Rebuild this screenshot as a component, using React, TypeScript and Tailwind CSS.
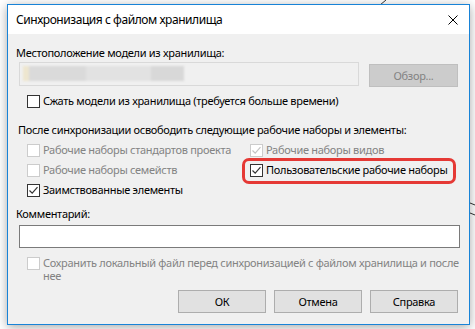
import React from 'react';

const font = { fontFamily: '"Noto Sans", "Segoe UI", Arial, sans-serif' };

type BoxProps = { checked?: boolean; disabled?: boolean };

const CheckBox = ({ checked, disabled }: BoxProps) => (
  <div
    className={`w-[13px] h-[13px] shrink-0 bg-white border ${
      disabled ? 'border-[#cccccc]' : 'border-[#333333]'
    } flex items-center justify-center`}
  >
    {checked && (
      <svg width="11" height="11" viewBox="0 0 11 11">
        <path
          d="M1.5 5.5 L4.2 8.2 L9.5 2.2"
          fill="none"
          stroke={disabled ? '#c4c4c4' : '#333333'}
          strokeWidth="1.2"
        />
      </svg>
    )}
  </div>
);

const Option = ({
  label,
  checked,
  disabled,
}: BoxProps & { label: string }) => (
  <div className="flex items-center gap-[3px] h-5 whitespace-nowrap">
    <CheckBox checked={checked} disabled={disabled} />
    <span className={disabled ? 'text-[#838383]' : 'text-black'}>{label}</span>
  </div>
);

const Button = ({ label }: { label: string }) => (
  <div className="w-[88px] h-[23px] border border-[#adadad] bg-[#e1e1e1] flex items-center justify-center text-black">
    {label}
  </div>
);

export default function App() {
  return (
    <div
      className="relative w-[475px] h-[329px] bg-white overflow-hidden text-[11px] leading-4 tracking-[-0.3px] whitespace-nowrap"
      style={font}
    >
      {/* background lines behind the dialog */}
      <svg className="absolute left-0 top-0" width="475" height="329">
        <path d="M380 5 L386 0" stroke="#333" strokeWidth="1" fill="none" />
        <path d="M470 203 L475 205" stroke="#333" strokeWidth="1" fill="none" />
        <path d="M470 213 L475 215" stroke="#333" strokeWidth="1" fill="none" />
      </svg>

      <div className="relative ml-[7px] mt-[4px] w-[463px] h-[321px] border border-[#1883d7] bg-[#f0f0f0] shadow-[0_2px_10px_rgba(0,0,0,0.35)] flex flex-col">
        {/* Title bar */}
        <div className="h-[29px] bg-white flex items-center justify-between pl-[8px] pr-[11px] shrink-0">
          <span className="text-black text-[12px] tracking-[-0.45px]">
            Синхронизация с файлом хранилища
          </span>
          <svg width="10" height="10" viewBox="0 0 10 10">
            <path d="M0.5 0.5 L9.5 9.5 M9.5 0.5 L0.5 9.5" stroke="#000" strokeWidth="1" />
          </svg>
        </div>

        {/* Body */}
        <div className="flex flex-col px-[8px] pt-[11px] text-black">
          <div className="h-4">Местоположение модели из хранилища:</div>

          <div className="flex mt-[1px] ml-[3px] gap-[10px]">
            <div className="relative w-[340px] h-[24px] border border-[#d9d9d9] bg-[#f0f0f0] overflow-hidden">
              <div className="absolute left-[3px] top-[3px] h-[15px] flex blur-[1px]">
                <div className="w-[6px] bg-[#eee6cf]" />
                <div className="w-[57px] bg-[#dadada]" />
                <div className="w-[65px] bg-[#e2e2e2]" />
                <div className="w-[33px] bg-[#d8d8d8]" />
              </div>
            </div>
            <div className="mt-[2px] w-[89px] h-[23px] border border-[#bfbfbf] bg-[#cccccc] flex items-center justify-center text-[#838383]">
              Обзор...
            </div>
          </div>

          <div className="mt-[4px] ml-[11px]">
            <Option label="Сжать модели из хранилища (требуется больше времени)" />
          </div>

          <div className="mt-[11px] h-4 ml-[2px]">
            После синхронизации освободить следующие рабочие наборы и элементы:
          </div>

          <div className="mt-[2px] ml-[11px] grid grid-cols-[223px_1fr]">
            <Option label="Рабочие наборы стандартов проекта" disabled />
            <Option label="Рабочие наборы видов" checked disabled />
            <Option label="Рабочие наборы семейств" disabled />
            <div className="relative">
              <Option label="Пользовательские рабочие наборы" checked />
              <div className="absolute left-[-8px] top-[-2px] w-[214px] h-[26px] border-[3.5px] border-[#e53935] rounded-[7px] pointer-events-none" />
            </div>
            <Option label="Заимствованные элементы" checked />
          </div>

          <div className="mt-[6px] h-4">Комментарий:</div>

          <div className="mt-[3px] ml-[3px] w-[441px] h-[23px] border border-[#7a7a7a] bg-white" />

          <div className="mt-[8px] ml-[11px] flex gap-[3px] text-[#838383]">
            <div className="mt-[1px]">
              <CheckBox disabled />
            </div>
            <div className="flex flex-col">
              <div className="h-[13px] leading-[13px]">
                Сохранить локальный файл перед синхронизацией с файлом хранилища и после
              </div>
              <div className="h-[13px] leading-[13px]">нее</div>
            </div>
          </div>

          <div className="mt-[8px] flex justify-end gap-[8px] pr-[3px]">
            <Button label="ОК" />
            <Button label="Отмена" />
            <Button label="Справка" />
          </div>
        </div>
      </div>
    </div>
  );
}
